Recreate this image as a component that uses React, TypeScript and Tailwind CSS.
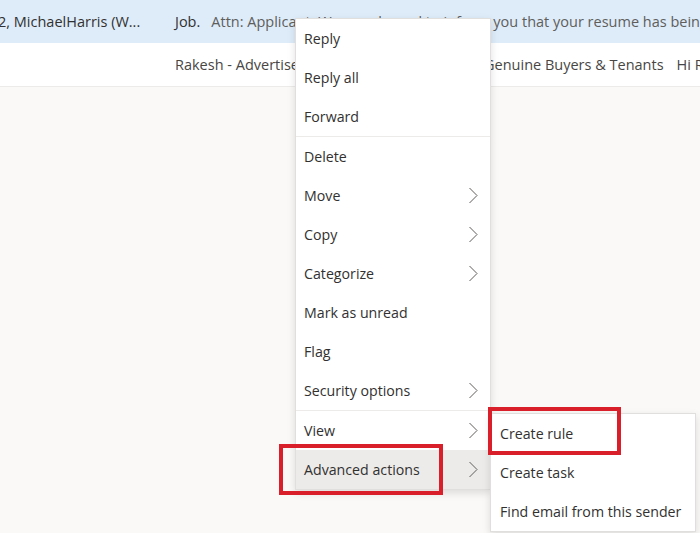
const font = { fontFamily: '"Open Sans", "Noto Sans", sans-serif' };

type Item = { label: string; sub?: boolean; sep?: boolean; hover?: boolean };

const items: Item[] = [
  { label: "Reply" },
  { label: "Reply all" },
  { label: "Forward", sep: true },
  { label: "Delete" },
  { label: "Move", sub: true },
  { label: "Copy", sub: true },
  { label: "Categorize", sub: true },
  { label: "Mark as unread" },
  { label: "Flag" },
  { label: "Security options", sub: true, sep: true },
  { label: "View", sub: true },
  { label: "Advanced actions", sub: true, hover: true },
];

const subItems = ["Create rule", "Create task", "Find email from this sender"];

function Chevron() {
  return (
    <svg width="11" height="17" viewBox="0 0 11 17" fill="none" className="text-[#605e5c]">
      <path d="M1.5 1 L9 8.5 L1.5 16" stroke="currentColor" strokeWidth="1" />
    </svg>
  );
}

function MenuRow({ item }: { item: Item }) {
  return (
    <>
      <div
        className={`flex h-[39px] items-center justify-between pl-[8px] pr-[11px] text-[14.2px] text-[#323130] ${
          item.hover ? "bg-[#edebe9]" : ""
        }`}
      >
        <span>{item.label}</span>
        {item.sub && <Chevron />}
      </div>
      {item.sep && <div className="h-px bg-[#edebe9]" />}
    </>
  );
}

export default function App() {
  return (
    <div className="relative h-[533px] w-[700px] overflow-hidden bg-[#faf9f8]" style={font}>
      <div className="flex h-[43px] items-center whitespace-nowrap bg-[#deecf9] text-[14.5px]">
        <span className="-ml-[2px] w-[177px] shrink-0 text-[#323130]">2, MichaelHarris (W...</span>
        <span className="text-[#323130]">Job.</span>
        <span className="ml-[11px] w-[282px] shrink-0 overflow-hidden text-[#605e5c]">
          Attn: Applicant. We are pleased to inform
        </span>
        <span className="text-[#605e5c]">you that your resume has being</span>
      </div>
      <div className="flex h-[44px] items-center whitespace-nowrap border-b border-[#edebe9] bg-white text-[14.5px] text-[#484644]">
        <span className="ml-[175px] w-[309px] shrink-0 overflow-hidden">
          Rakesh - Advertisement for Property with
        </span>
        <span>Genuine Buyers &amp; Tenants</span>
        <span className="ml-[13px]">Hi Rakesh</span>
      </div>

      <div className="absolute left-[295px] top-[18px] w-[196px] border border-[#e1dfdd] bg-white shadow-[0_3px_8px_rgba(0,0,0,0.12)]">
        {items.map((it) => (
          <MenuRow key={it.label} item={it} />
        ))}
      </div>

      <div className="absolute left-[490px] top-[413px] w-[206px] border border-[#e1dfdd] bg-white shadow-[0_3px_8px_rgba(0,0,0,0.12)]">
        {subItems.map((s) => (
          <div key={s} className="flex h-[39px] items-center pl-[9px] text-[14.2px] text-[#323130]">
            {s}
          </div>
        ))}
      </div>

      <div className="pointer-events-none absolute left-[279px] top-[444px] h-[51px] w-[164px] border-4 border-[#d9202a]" />
      <div className="pointer-events-none absolute left-[488px] top-[407px] h-[48px] w-[133px] border-4 border-[#d9202a]" />
    </div>
  );
}
